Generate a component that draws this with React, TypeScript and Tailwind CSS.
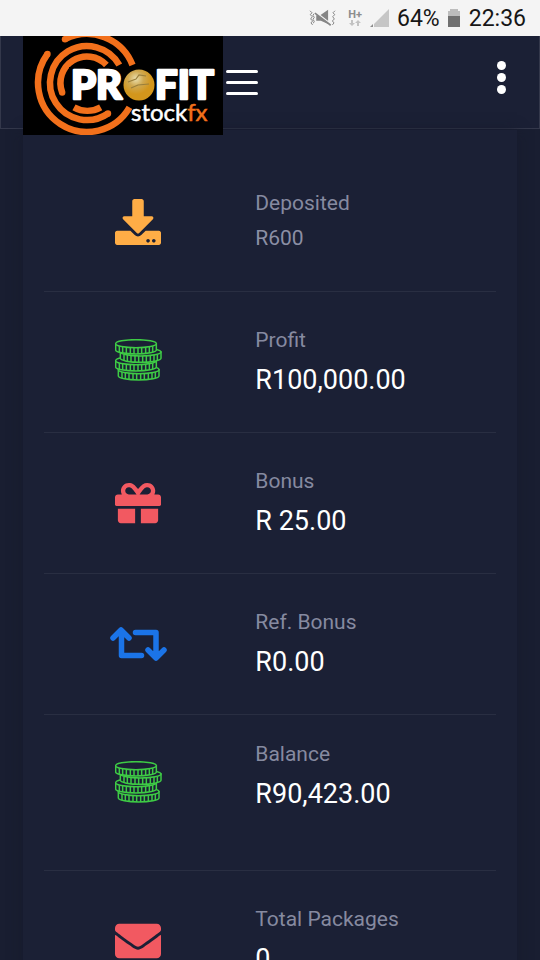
import { ReactNode } from "react";
import { FaDownload, FaEnvelope, FaGift } from "react-icons/fa";

type Stat = {
    label: string;
    value: string;
    icon: ReactNode;
    rowClass: string;
    iconClass?: string;
    valueClass?: string;
};

const bigValue = "text-[27px] leading-[48px] text-white";

function CoinStack() {
    // bottom coin first so that each one covers the coin below
    const coins = [
        { cx: 71, top: 92 },
        { cx: 63, top: 65 },
        { cx: 77, top: 39 },
        { cx: 63, top: 14 },
    ];
    const ticks = [-50, -40, -29, -17, -6, 6, 17, 29, 40, 50];

    return (
        <svg viewBox="0 0 141 126" className="w-[47px] h-[42px]" fill="#1b2035" stroke="#3ecb45" strokeWidth="4.500" aria-hidden="true">
            {coins.map((coin) => (
                <g key={coin.top}>
                    <path d={`M${coin.cx - 61} ${coin.top}v19a61 12 0 0 0 122 0v-19z`} />
                    {ticks.map((dx) => {
                        const y = coin.top + 12 * Math.sqrt(1 - (dx / 61) ** 2);
                        return <path key={dx} d={`M${coin.cx + dx} ${y}v19`} />;
                    })}
                    <ellipse cx={coin.cx} cy={coin.top} rx="61" ry="12" />
                </g>
            ))}
        </svg>
    );
}

function Retweet() {
    return (
        <svg viewBox="0 0 57 36" className="w-[57px] h-9" fill="none" stroke="#1b74e8" strokeWidth="5.500" strokeLinecap="round" strokeLinejoin="round" aria-hidden="true">
            <path d="M3 12L11 4l8 8M11.500 5v24.500h20" />
            <path d="M38 24l8 8 8-8M46 31V6.500H25.500" />
        </svg>
    );
}

const stats: Stat[] = [
    {
        label: "Deposited",
        value: "R600",
        icon: <FaDownload className="size-[46px] text-[#ffad46]" />,
        rowClass: "pt-[57px] pb-[34px]",
        valueClass: "text-[21px] leading-[38px] text-[#8b8fa5]",
    },
    { label: "Profit", value: "R100,000.00", icon: <CoinStack />, rowClass: "pt-8 pb-7", iconClass: "pb-2" },
    { label: "Bonus", value: "R 25.00", icon: <FaGift className="size-[46px] text-[#f25961]" />, rowClass: "pt-8 pb-7", iconClass: "pb-1" },
    { label: "Ref. Bonus", value: "R0.00", icon: <Retweet />, rowClass: "pt-8 pb-7", iconClass: "pb-1" },
    { label: "Balance", value: "R90,423.00", icon: <CoinStack />, rowClass: "pt-[23px] pb-[52px]", iconClass: "pt-2" },
    { label: "Total Packages", value: "0", icon: <FaEnvelope className="size-[46px] text-[#f25961]" />, rowClass: "pt-8 pb-7", iconClass: "pb-1" },
];

function StatusBar() {
    return (
        <div className="flex h-9 shrink-0 items-center justify-end bg-[#f4f4f4] pr-[14px] text-[23px] leading-9 text-[#161616]">
            <svg viewBox="0 0 82 54" className="w-[27px] h-[18px]" fill="none" stroke="#858585" strokeWidth="3" aria-hidden="true">
                <path d="M3 5l6 6-5 6 6 6-5 7 6 6-5 6 5 6M15 14l-3 5 4 6-4 6 4 6-3 6" />
                <path d="M79 5l-6 6 5 6-6 6 5 7-6 6 5 6-5 6" />
                <path d="M22 19h12L58 2v43L36 35H22z" fill="#858585" stroke="none" />
                <path d="M18 8l48 37" stroke="#f4f4f4" strokeWidth="5" />
                <path d="M18 12l48 37" stroke="#858585" strokeWidth="5" />
            </svg>
            <div className="ml-3 flex flex-col items-center">
                <span className="text-[11px] leading-[11px] font-bold text-[#8d8d8d]">H+</span>
                <svg viewBox="0 0 12 7" className="w-3 h-[7px]" fill="#c2c2c2" aria-hidden="true">
                    <path d="M2 0h2v3h2L3 6 0 3h2zM8 6h2V3h2L9 0 6 3h2z" />
                </svg>
            </div>
            <svg viewBox="0 0 19 19" className="ml-2 size-[19px]" aria-hidden="true">
                <path d="M19 0v18H4V15z" fill="#c6c6c6" />
                <path d="M3 15v3H0z" fill="#8d8d8d" />
            </svg>
            <span className="ml-2 pt-[2px]">64%</span>
            <svg viewBox="0 0 12 18" className="ml-2 w-3 h-[18px]" aria-hidden="true">
                <path d="M2 0h8v2h2v5H0V2h2z" fill="#bdbdbd" />
                <path d="M0 7h12v11H0z" fill="#707070" />
            </svg>
            <span className="ml-[9px] pt-[2px]">22:36</span>
        </div>
    );
}

function Logo() {
    return (
        <svg viewBox="0 0 200 99" className="relative z-10 h-[99px] w-[200px] shrink-0 bg-black" role="img" aria-label="Profit stockfx">
            <defs>
                <radialGradient id="coin" cx="40%" cy="30%">
                    <stop offset="0" stopColor="#eadfae" />
                    <stop offset="0.5" stopColor="#cfa850" />
                    <stop offset="1" stopColor="#d3961c" />
                </radialGradient>
            </defs>
            <g fill="none" stroke="#f2701b" strokeWidth="6.500">
                <path d="M24.500 18A49 49 0 1 0 106.500 71.400" />
                <path d="M42 3.200A49 49 0 0 1 109.500 29" />
                <path d="M96.300 29A37 37 0 1 0 85 77.500" />
                <path d="M83.400 29A26.500 26.500 0 0 0 39.200 56.500" />
                <path d="M51 71.300A27.500 27.500 0 0 0 77.700 71.300" />
            </g>
            <g fill="#f2701b">
                <circle cx="24.500" cy="18" r="3.200" />
                <circle cx="42" cy="3.200" r="3.200" />
                <circle cx="85" cy="77.500" r="3.200" />
                <circle cx="39.200" cy="56.500" r="3.200" />
            </g>
            <path d="M46 31H200V67H46z" fill="#000" />
            <g fill="#fff" stroke="#fff" strokeWidth="2.500" strokeLinejoin="round" fontFamily="Lato, sans-serif" fontWeight="900" fontSize="40">
                <text x="48" y="63">PR</text>
                <text x="132" y="63">FIT</text>
            </g>
            <circle cx="116" cy="49" r="15.500" fill="url(#coin)" />
            <path d="M105 46l8-3 3-4 7 1M108 52l7-3 11-1" fill="none" stroke="#9a7f3c" strokeWidth="1.200" />
            <text x="108" y="85" fill="#fff" stroke="#fff" strokeWidth="0.500" fontFamily="Lato, sans-serif" fontSize="24">
                stock<tspan fill="#f2701b" stroke="#f2701b">fx</tspan>
            </text>
        </svg>
    );
}

function Header() {
    return (
        <header className="flex h-[93px] shrink-0 items-start border border-t-0 border-[#34384b] bg-[#1b2035] pl-[22px]">
            <Logo />
            <button type="button" aria-label="Toggle sidebar" className="mt-[34px] ml-[3px] flex flex-col gap-2">
                <span className="h-[3px] w-8 rounded-full bg-white" />
                <span className="h-[3px] w-8 rounded-full bg-white" />
                <span className="h-[3px] w-8 rounded-full bg-white" />
            </button>
            <button type="button" aria-label="More options" className="mt-[25px] mr-[33px] ml-auto flex flex-col gap-[3px]">
                <span className="size-[9px] rounded-full bg-white" />
                <span className="size-[9px] rounded-full bg-white" />
                <span className="size-[9px] rounded-full bg-white" />
            </button>
        </header>
    );
}

export default function App() {
    return (
        <div className="flex h-screen flex-col overflow-hidden bg-[#191e31] font-[Roboto,sans-serif]">
            <StatusBar />
            <Header />
            <main className="mx-[23px] mt-px bg-[#1b2035] px-[21px] shadow-[0_0_12px_#171b2d]">
                {stats.map((stat) => (
                    <section key={stat.label} className={`grid grid-cols-12 items-center border-b border-[#292e42] ${stat.rowClass}`}>
                        <div className={`col-span-5 flex justify-center ${stat.iconClass ?? ""}`}>{stat.icon}</div>
                        <div className="col-span-7 pl-[23px]">
                            <p className="text-[21px] leading-8 text-[#868aa0]">{stat.label}</p>
                            <p className={stat.valueClass ?? bigValue}>{stat.value}</p>
                        </div>
                    </section>
                ))}
            </main>
        </div>
    );
}
